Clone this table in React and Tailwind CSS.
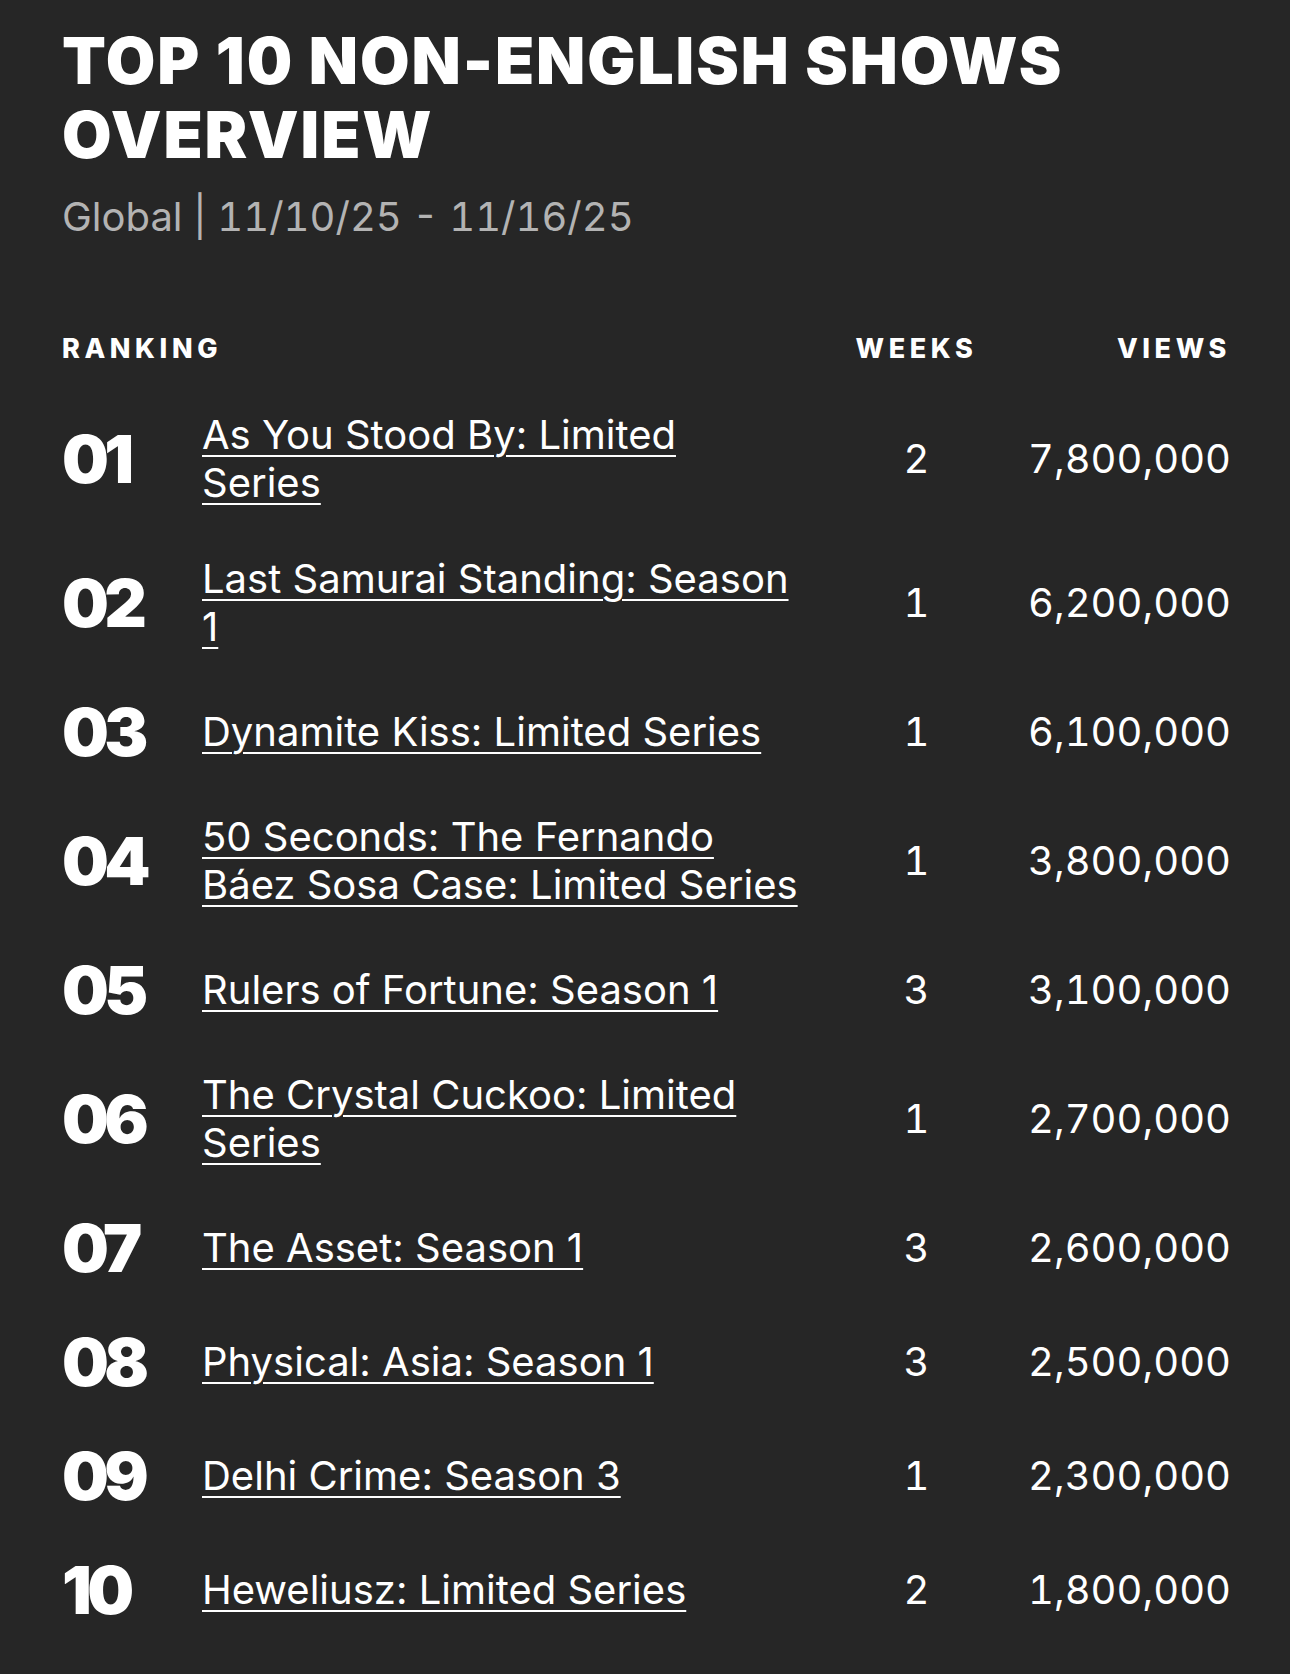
import React from "react";

const rows = [
  { rank: "01", title: "As You Stood By: Limited Series", weeks: "2", views: "7,800,000" },
  { rank: "02", title: "Last Samurai Standing: Season 1", weeks: "1", views: "6,200,000" },
  { rank: "03", title: "Dynamite Kiss: Limited Series", weeks: "1", views: "6,100,000" },
  { rank: "04", title: "50 Seconds: The Fernando Báez Sosa Case: Limited Series", weeks: "1", views: "3,800,000" },
  { rank: "05", title: "Rulers of Fortune: Season 1", weeks: "3", views: "3,100,000" },
  { rank: "06", title: "The Crystal Cuckoo: Limited Series", weeks: "1", views: "2,700,000" },
  { rank: "07", title: "The Asset: Season 1", weeks: "3", views: "2,600,000" },
  { rank: "08", title: "Physical: Asia: Season 1", weeks: "3", views: "2,500,000" },
  { rank: "09", title: "Delhi Crime: Season 3", weeks: "1", views: "2,300,000" },
  { rank: "10", title: "Heweliusz: Limited Series", weeks: "2", views: "1,800,000" },
];

export default function App() {
  return (
    <div
      className="min-h-[1674px] w-full bg-[#262626] px-[62px] pt-[24px] pb-[27px] text-white"
      style={{ fontFamily: "Inter, 'Noto Sans', sans-serif" }}
    >
      <h1 className="text-[64px] font-black leading-[74px] tracking-[0.03em] uppercase">
        Top 10 Non-English Shows Overview
      </h1>
      <p className="mt-[21px] text-[40px] leading-[48px] tabular-nums text-[#b3b3b3]">
        Global | 11/10/25 - 11/16/25
      </p>

      <div className="mt-[92px] grid grid-cols-[140px_599px_1fr_200px] text-[27px] font-extrabold uppercase leading-[32px] tracking-[0.17em]">
        <div>Ranking</div>
        <div></div>
        <div className="pl-[4px] text-center">Weeks</div>
        <div className="-mr-[3px] text-right">Views</div>
      </div>

      <div className="mt-[22px] flex flex-col">
        {rows.map((r) => (
          <div key={r.rank} className="grid grid-cols-[140px_599px_1fr_200px] items-center py-6">
            <div className="text-[66px] font-black leading-[66px] tracking-[-0.07em]">{r.rank}</div>
            <div className="text-[40px] leading-[48px]">
              <a href="#" className="underline decoration-2 underline-offset-[6px]">
                {r.title}
              </a>
            </div>
            <div className="pl-[4px] text-center text-[40px] leading-[48px] tabular-nums">{r.weeks}</div>
            <div className="whitespace-nowrap text-right text-[40px] leading-[48px] tabular-nums">{r.views}</div>
          </div>
        ))}
      </div>
    </div>
  );
}
